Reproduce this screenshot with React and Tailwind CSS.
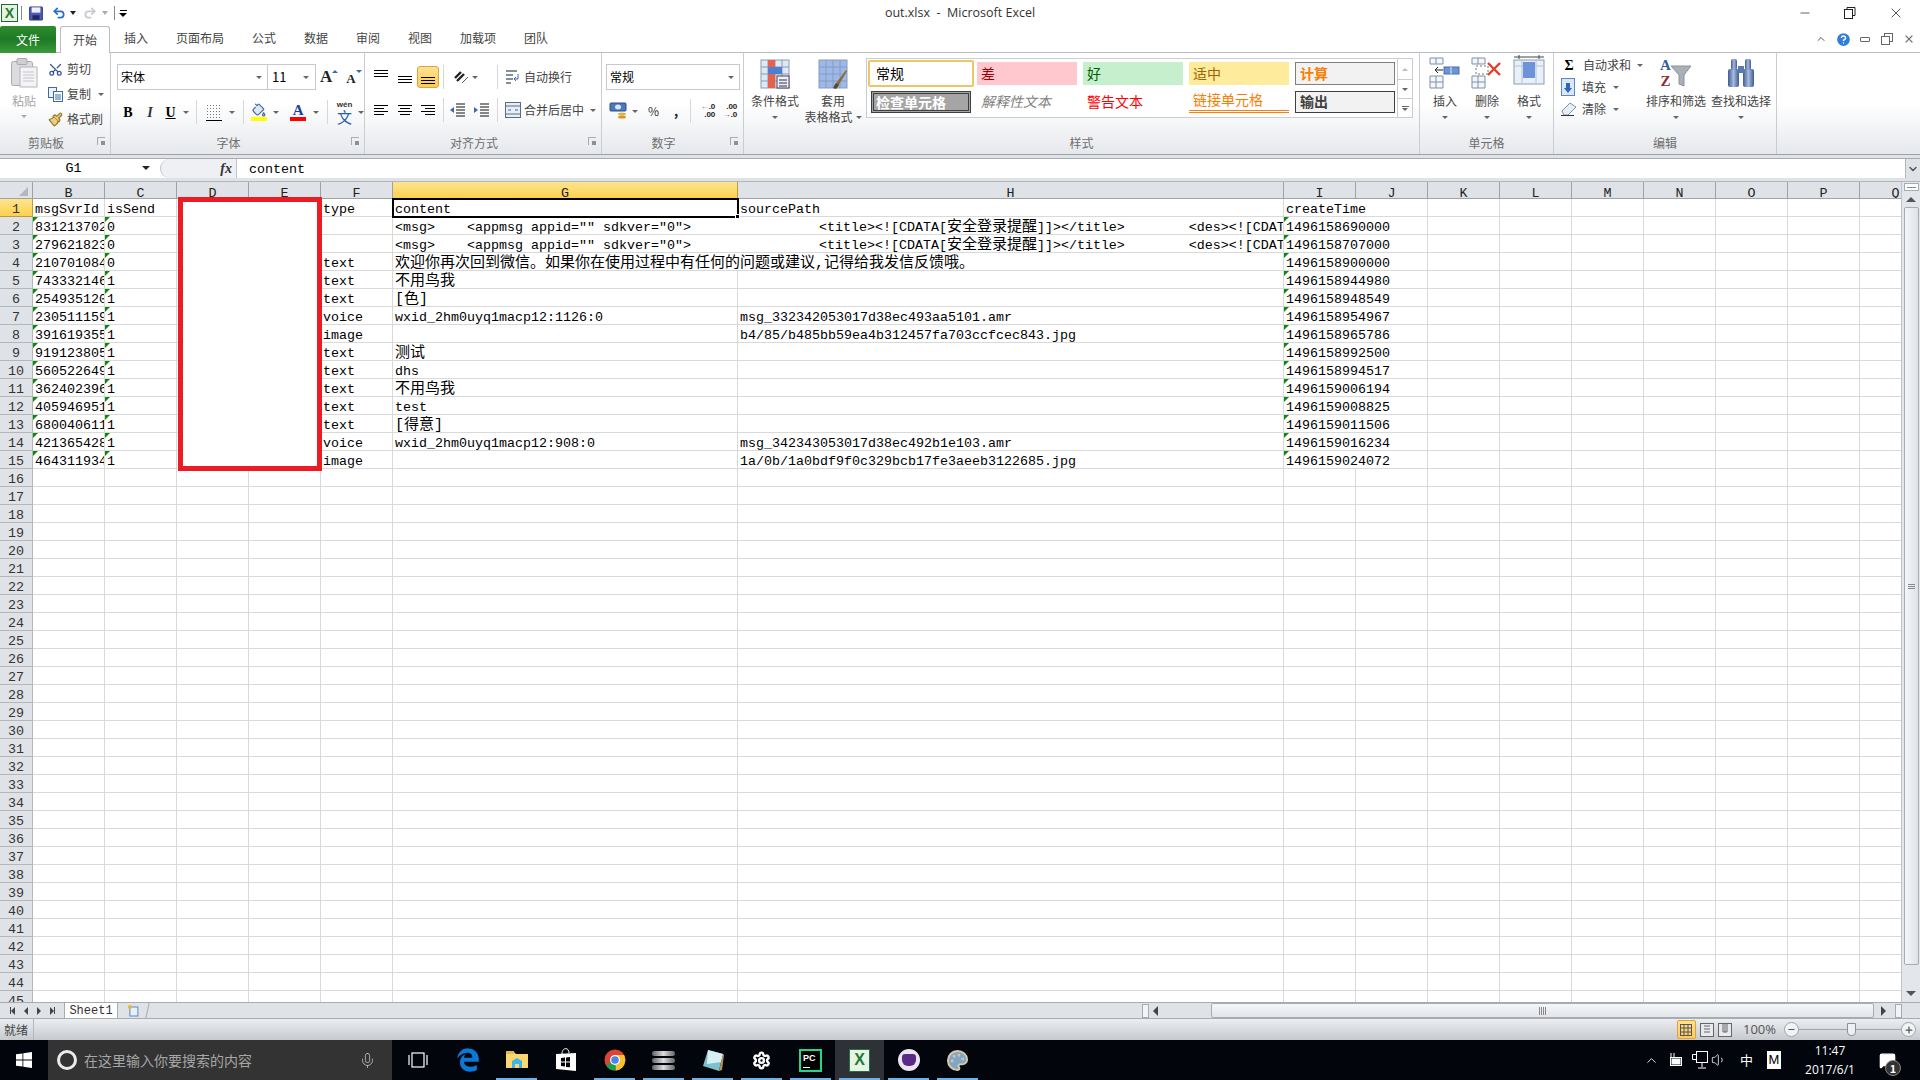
import {
  Scissors, Paintbrush, PaintBucket, Undo2, Redo2, Mic, Settings, Palette,
  ChevronUp, ChevronDown, HelpCircle, Minus, X, Volume1, MessageSquare, Plus,
} from 'lucide-react'
import { FaEdgeLegacy } from 'react-icons/fa6'

const TABS = ['插入', '页面布局', '公式', '数据', '审阅', '视图', '加载项', '团队']
const COLS = [
  ['B', 72], ['C', 72], ['D', 72], ['E', 72], ['F', 72], ['G', 345], ['H', 546],
  ['I', 72], ['J', 72], ['K', 72], ['L', 72], ['M', 72], ['N', 72], ['O', 72], ['P', 72], ['Q', 72],
]

function Cjk({ children }) {
  return <span className="text-[15px]">{children}</span>
}

const XML = (
  <>
    {'<msg>    <appmsg appid="" sdkver="0">                <title><![CDATA['}
    <Cjk>安全登录提醒</Cjk>
    {']]></title>        <des><![CDATA['}
    <Cjk>安全登录提醒</Cjk>
  </>
)

const DATA = [
  ['msgSvrId', 'isSend', 'type', 'content', 'sourcePath', 'createTime'],
  ['831213702', '0', '', XML, '', '1496158690000'],
  ['279621823', '0', '', XML, '', '1496158707000'],
  ['210701084', '0', 'text', <Cjk>欢迎你再次回到微信。如果你在使用过程中有任何的问题或建议,记得给我发信反馈哦。</Cjk>, '', '1496158900000'],
  ['743332146', '1', 'text', <Cjk>不用鸟我</Cjk>, '', '1496158944980'],
  ['254935120', '1', 'text', <Cjk>[色]</Cjk>, '', '1496158948549'],
  ['230511159', '1', 'voice', 'wxid_2hm0uyq1macp12:1126:0', 'msg_332342053017d38ec493aa5101.amr', '1496158954967'],
  ['391619355', '1', 'image', '', 'b4/85/b485bb59ea4b312457fa703ccfcec843.jpg', '1496158965786'],
  ['919123805', '1', 'text', <Cjk>测试</Cjk>, '', '1496158992500'],
  ['560522649', '1', 'text', 'dhs', '', '1496158994517'],
  ['362402396', '1', 'text', <Cjk>不用鸟我</Cjk>, '', '1496159006194'],
  ['405946951', '1', 'text', 'test', '', '1496159008825'],
  ['680040611', '1', 'text', <Cjk>[得意]</Cjk>, '', '1496159011506'],
  ['421365428', '1', 'voice', 'wxid_2hm0uyq1macp12:908:0', 'msg_342343053017d38ec492b1e103.amr', '1496159016234'],
  ['464311934', '1', 'image', '', '1a/0b/1a0bdf9f0c329bcb17fe3aeeb3122685.jpg', '1496159024072'],
]

function Caret({ className = '' }) {
  return <span className={`inline-block w-0 h-0 border-x-[3px] border-x-transparent border-t-[3px] border-t-[#666] ${className}`} />
}

function Lines({ widths = [14, 14, 14] }) {
  return (
    <span className="flex flex-col gap-[2px] items-start">
      {widths.map((w, i) => (
        <span key={i} className="h-px bg-black" style={{ width: w }} />
      ))}
    </span>
  )
}

function Launcher() {
  return (
    <span className="absolute right-[5px] top-[6px] w-[8px] h-[8px] border-l border-t border-[#a8abb0]">
      <span className="absolute right-0 bottom-0 w-[4px] h-[4px] bg-[#8d9096]" />
    </span>
  )
}

function Group({ width, title, children }) {
  const launcher = title !== '样式' && title !== '单元格' && title !== '编辑'
  return (
    <div className="flex flex-col shrink-0 border-r border-r-[#c9ccd1] h-full" style={{ width }}>
      <div className="h-[79px] relative">{children}</div>
      <div className={`h-[23px] flex items-center justify-center relative text-[12px] text-[#6e6e6e] ${launcher ? 'pr-[18px]' : ''}`}>
        {title}
        {launcher && <Launcher />}
      </div>
    </div>
  )
}

function Sep() {
  return <span className="block w-px h-[24px] bg-[#d5d7db] shrink-0" />
}

function GridIcon({ size = 30, fill = '#dfe8f5', children }) {
  return (
    <svg width={size} height={size} viewBox="0 0 30 30">
      <rect x="1" y="1" width="28" height="28" fill={fill} stroke="#8a9bb4" />
      <path d="M1 8h28M1 15h28M1 22h28M8 1v28M15 1v28M22 1v28" stroke="#8a9bb4" fill="none" />
      {children}
    </svg>
  )
}

function BigButton({ icon, lines, width = 50 }) {
  return (
    <div className="flex flex-col items-center shrink-0" style={{ width }}>
      <div className="h-[36px] flex items-end justify-center">{icon}</div>
      <div className="mt-[4px] h-[16px] leading-[16px] whitespace-nowrap text-[12px] text-[#444]">{lines[0]}</div>
      <div className="h-[16px] flex items-center justify-center gap-[3px] whitespace-nowrap text-[12px] text-[#444]">
        {lines[1] && <span>{lines[1]}</span>}
        <Caret />
      </div>
    </div>
  )
}

function ClipboardGroup() {
  return (
    <Group width={111} title="剪贴板">
      <div className="flex h-full">
        <div className="w-[48px] flex flex-col items-center pt-[5px] text-[#a5a5a5] text-[12px]">
          <svg width="27" height="30" viewBox="0 0 27 30">
            <rect x="0.5" y="3.5" width="21" height="24" rx="2" fill="#dcdbe0" stroke="#a9a8ae" />
            <rect x="6" y="0.5" width="10" height="6" rx="1" fill="#cfced4" stroke="#a9a8ae" />
            <path d="M9 9h17v20H9z" fill="#f4f4f6" stroke="#b4b4ba" />
            <path d="M12 14h11M12 17h11M12 20h11M12 23h11" stroke="#c6c6cc" />
          </svg>
          <div className="mt-[4px] text-[12px] leading-[18px]">粘贴</div>
          <Caret className="mt-[5px] border-t-[#aaa]" />
        </div>
        <div className="flex flex-col pt-[8px] text-[12px] text-[#444] gap-[9px]">
          <div className="flex items-center gap-[4px] h-[16px]">
            <Scissors size={15} className="text-[#34558b] -rotate-90" />
            <span>剪切</span>
          </div>
          <div className="flex items-center gap-[4px] h-[16px]">
            <svg width="15" height="15" viewBox="0 0 15 15">
              <rect x="0.5" y="0.5" width="8" height="10" fill="#eef3fa" stroke="#3d6aa8" />
              <rect x="5.5" y="4.5" width="9" height="10" fill="#fff" stroke="#3d6aa8" />
              <path d="M7 8h6M7 10h6M7 12h6" stroke="#3d6aa8" />
            </svg>
            <span>复制</span>
            <Caret className="ml-[3px]" />
          </div>
          <div className="flex items-center gap-[4px] h-[16px]">
            <Paintbrush size={15} className="text-[#9a7a2c] fill-[#e8cf85]" />
            <span>格式刷</span>
          </div>
        </div>
      </div>
    </Group>
  )
}

function FontGroup() {
  return (
    <Group width={254} title="字体">
      <div className="pl-[6px]">
        <div className="flex items-center mt-[11px] h-[26px]">
          <div className="w-[151px] h-[26px] border border-[#c6c9ce] bg-white flex items-center justify-between px-[3px] text-[12px]">
            <span>宋体</span>
            <Caret className="mr-[2px]" />
          </div>
          <div className="w-[48px] h-[26px] border border-l-0 border-[#c6c9ce] bg-white flex items-center justify-between px-[4px] text-[13px]">
            <span>11</span>
            <Caret className="mr-[2px]" />
          </div>
          <span className="ml-[4px] font-['Liberation_Serif',serif] font-bold text-[17px] text-[#222]">A</span>
          <span className="w-0 h-0 mb-[12px] border-x-[3px] border-x-transparent border-b-[3px] border-b-[#3d6aa8]" />
          <span className="ml-[8px] mt-[3px] font-['Liberation_Serif',serif] font-bold text-[13px] text-[#222]">A</span>
          <span className="w-0 h-0 mb-[12px] border-x-[3px] border-x-transparent border-t-[3px] border-t-[#3d6aa8]" />
        </div>
        <div className="flex items-center mt-[10px] h-[24px] font-['Liberation_Serif',serif]">
          <span className="w-[23px] text-center font-bold text-[14px] text-black">B</span>
          <span className="w-[24px] text-center italic font-bold text-[14px] text-[#333]">I</span>
          <span className="w-[20px] text-center font-bold underline text-[14px] text-black">U</span>
          <span className="w-[12px] flex justify-center"><Caret /></span>
          <span className="ml-[5px]"><Sep /></span>
          <span className="ml-[9px] w-[17px] h-[17px] border-b border-black [background-image:radial-gradient(#777_0.6px,transparent_0.7px)] [background-size:3px_3px]" />
          <span className="ml-[7px] flex"><Caret /></span>
          <span className="ml-[8px]"><Sep /></span>
          <span className="ml-[7px] w-[17px] flex flex-col items-center">
            <PaintBucket size={14} className="text-[#3d6aa8] fill-[#dce6f4]" />
            <span className="w-[16px] h-[4px] bg-[#ffff00]" />
          </span>
          <span className="ml-[6px] flex"><Caret /></span>
          <span className="ml-[11px] w-[16px] flex flex-col items-center text-[15px] leading-[14px] font-bold text-[#20409a]">
            A
            <span className="w-[16px] h-[4px] bg-[#ff0000]" />
          </span>
          <span className="ml-[7px] flex"><Caret /></span>
          <span className="ml-[8px]"><Sep /></span>
          <span className="ml-[7px] w-[20px] flex flex-col items-center leading-none font-['Liberation_Sans',sans-serif]">
            <span className="text-[8px] font-bold text-[#333]">wén</span>
            <span className="text-[15px] leading-[15px] text-[#2a5db0] font-['Noto_Sans_CJK_SC',sans-serif]">文</span>
          </span>
          <span className="ml-[4px] flex"><Caret /></span>
        </div>
      </div>
    </Group>
  )
}

function AlignGroup() {
  return (
    <Group width={237} title="对齐方式">
      <div className="pl-[9px]">
        <div className="flex items-center mt-[12px] h-[24px]">
          <span className="w-[22px] h-[22px] flex pt-[4px]"><Lines /></span>
          <span className="w-[20px] h-[22px] flex items-center pl-[2px] pt-[5px]"><Lines /></span>
          <span className="ml-[1px] w-[22px] h-[22px] rounded-[3px] border border-[#d9a441] bg-gradient-to-b from-[#fee28f] to-[#fdc95a] flex items-end justify-center pb-[3px]"><Lines /></span>
          <span className="ml-[4px]"><Sep /></span>
          <span className="ml-[9px] w-[16px] h-[16px] flex items-center">
            <svg width="16" height="16" viewBox="0 0 16 16"><path d="M2 9l6-6M4 12l7-7" stroke="#222" strokeWidth="2.4" /><path d="M9 14l6-6" stroke="#555" /></svg>
          </span>
          <span className="ml-[3px] flex"><Caret /></span>
          <span className="ml-[19px]"><Sep /></span>
          <span className="ml-[7px] flex">
            <svg width="16" height="16" viewBox="0 0 16 16"><path d="M1 2h11M1 6h7M1 10h7M1 14h5" stroke="#5c6b7e" strokeWidth="1.4" /><path d="M13 5v5h-3M11 8l-2 2 2 2" stroke="#3d6aa8" fill="none" /></svg>
          </span>
          <span className="ml-[3px] text-[12px] text-[#444]">自动换行</span>
        </div>
        <div className="flex items-center mt-[9px] h-[24px]">
          <span className="w-[22px]"><Lines widths={[14, 10, 14, 10]} /></span>
          <span className="w-[20px] pl-[2px]"><span className="flex flex-col gap-[2px] items-center w-[14px]">
            {[14, 10, 14, 10].map((w, i) => <span key={i} className="h-px bg-black" style={{ width: w }} />)}
          </span></span>
          <span className="ml-[1px] w-[22px] pl-[4px]"><span className="flex flex-col gap-[2px] items-end w-[14px]">
            {[14, 10, 14, 10].map((w, i) => <span key={i} className="h-px bg-black" style={{ width: w }} />)}
          </span></span>
          <span className="ml-[4px]"><Sep /></span>
          <span className="ml-[6px] flex gap-[8px]">
            {['M0 7l4-3v6z', 'M0 4l4 3-4 3z'].map((d) => (
              <svg key={d} width="16" height="14" viewBox="0 0 16 14">
                <path d={d} fill="#3d6aa8" />
                <path d="M6 1h9M6 4h9M6 7h9M6 10h9M6 13h9" stroke="#111" />
              </svg>
            ))}
          </span>
          <span className="ml-[7px]"><Sep /></span>
          <span className="ml-[7px] flex">
            <svg width="16" height="16" viewBox="0 0 16 16"><rect x="0.5" y="0.5" width="15" height="15" fill="#e8eef7" stroke="#5c6b7e" /><path d="M1 4h14M1 12h14" stroke="#5c6b7e" /><path d="M3 8h3M10 8h3" stroke="#3d6aa8" /></svg>
          </span>
          <span className="ml-[3px] text-[12px] text-[#444]">合并后居中</span>
          <Caret className="ml-[6px]" />
        </div>
      </div>
    </Group>
  )
}

function NumberGroup() {
  return (
    <Group width={142} title="数字">
      <div className="pl-[4px]">
        <div className="mt-[11px] w-[134px] h-[26px] border border-[#c6c9ce] bg-white flex items-center justify-between px-[3px] text-[12px]">
          <span>常规</span>
          <Caret className="mr-[2px]" />
        </div>
        <div className="flex items-center mt-[9px] h-[24px] pl-[3px]">
          <svg width="18" height="18" viewBox="0 0 18 18"><rect x="1" y="1" width="16" height="8" rx="1" fill="#4c78bd" stroke="#2c4f86" /><ellipse cx="9" cy="5" rx="3" ry="2.5" fill="#dce6f4" /><ellipse cx="13" cy="12" rx="4" ry="1.6" fill="#e2b23e" /><ellipse cx="13" cy="15" rx="4" ry="1.6" fill="#d19a22" /></svg>
          <Caret className="ml-[5px]" />
          <span className="ml-[10px] text-[12px] text-[#333]">%</span>
          <span className="ml-[15px] font-bold text-[13px] text-[#222]">,</span>
          <span className="ml-[12px]"><Sep /></span>
          <span className="ml-[8px] w-[16px] text-[8px] leading-[8px] font-bold text-[#222] text-right font-['Liberation_Sans',sans-serif]">
            <span className="text-[#3d6aa8]">←</span>.0<br />.00
          </span>
          <span className="ml-[6px] w-[16px] text-[8px] leading-[8px] font-bold text-[#222] text-right font-['Liberation_Sans',sans-serif]">
            .00<br /><span className="text-[#3d6aa8]">→</span>.0
          </span>
        </div>
      </div>
    </Group>
  )
}

function StyleCell({ className, children }) {
  return <div className={`flex items-center shrink-0 text-[14px] leading-none whitespace-nowrap ${className}`}>{children}</div>
}

function StylesGroup() {
  return (
    <Group width={676} title="样式">
      <div className="flex h-full">
        <div className="ml-[2px]">
          <BigButton
            width={58}
            lines={['条件格式']}
            icon={
              <GridIcon>
                <rect x="8" y="1" width="7" height="28" fill="#e8604c" />
                <rect x="8" y="8" width="14" height="7" fill="#4f7fd0" />
                <rect x="17" y="17" width="12" height="12" fill="#eef" stroke="#445" />
                <path d="M19 21h8M19 24h8M19 27h8" stroke="#333" />
              </GridIcon>
            }
          />
        </div>
        <div>
          <BigButton
            width={58}
            lines={['套用', '表格格式']}
            icon={
              <GridIcon fill="#9db9ec">
                <path d="M16 27l12-16 1 1-10 17z" fill="#8a6c3a" />
                <path d="M15 29l3-5 3 2-3 4z" fill="#4f4a3f" />
              </GridIcon>
            }
          />
        </div>
        <div className="mt-[5px] ml-[4px] w-[547px] h-[60px] border border-[#c9ccd1] bg-white flex">
          <div className="flex-1 flex flex-col gap-[3px] pl-[1px] pt-[1px]">
            <div className="flex items-center gap-[3px] h-[27px]">
              <StyleCell className="w-[106px] h-[27px] border-2 border-[#f0c566] rounded-[2px] pl-[6px] pb-[2px] text-black">常规</StyleCell>
              <StyleCell className="w-[100px] h-[23px] bg-[#ffc7ce] pl-[4px] pb-[2px] text-[#9c0006]">差</StyleCell>
              <StyleCell className="ml-[3px] w-[100px] h-[23px] bg-[#c6efce] pl-[4px] pb-[2px] text-[#006100]">好</StyleCell>
              <StyleCell className="ml-[3px] w-[100px] h-[23px] bg-[#ffeb9c] pl-[4px] pb-[2px] text-[#9c6500]">适中</StyleCell>
              <StyleCell className="ml-[3px] w-[100px] h-[23px] bg-[#f2f2f2] border border-[#7f7f7f] pl-[4px] pb-[2px] text-[#fa7d00] font-bold">计算</StyleCell>
            </div>
            <div className="flex items-center gap-[3px] h-[23px]">
              <StyleCell className="ml-[3px] w-[100px] h-[22px] bg-[#a5a5a5] border-[3px] border-double border-[#3f3f3f] pl-[2px] text-white font-bold">检查单元格</StyleCell>
              <StyleCell className="ml-[3px] w-[100px] h-[22px] pl-[4px] pb-[2px] text-[#7f7f7f] italic">解释性文本</StyleCell>
              <StyleCell className="ml-[3px] w-[100px] h-[22px] pl-[4px] pb-[2px] text-[#ff0000]">警告文本</StyleCell>
              <StyleCell className="ml-[3px] w-[100px] h-[22px] pl-[4px] pb-[2px] text-[#fa7d00] border-b-[3px] border-double border-[#ff8001]">链接单元格</StyleCell>
              <StyleCell className="ml-[3px] w-[100px] h-[22px] bg-[#f2f2f2] border border-[#3f3f3f] pl-[4px] pb-[2px] text-[#3f3f3f] font-bold">输出</StyleCell>
            </div>
          </div>
          <div className="w-[15px] flex flex-col border-l border-[#c9ccd1] text-[#666]">
            <div className="h-[21px] flex items-center justify-center border-b border-[#c9ccd1]"><Caret className="rotate-180 border-t-[#bbb]" /></div>
            <div className="h-[19px] flex items-center justify-center border-b border-[#c9ccd1]"><Caret /></div>
            <div className="flex-1 flex flex-col items-center justify-center gap-[1px]"><span className="w-[7px] h-px bg-[#666]" /><Caret /></div>
          </div>
        </div>
      </div>
    </Group>
  )
}

function CellsGroup() {
  return (
    <Group width={134} title="单元格">
      <div className="flex pl-[4px]">
        <BigButton
          width={42}
          lines={['插入']}
          icon={
            <svg width="32" height="32" viewBox="0 0 32 32" fill="none">
              <path d="M1 1h13v6H1zM1 19h13v12H1zM1 25h13M7 1v6M7 19v12" stroke="#7e8fa8" fill="#f3f6fb" />
              <rect x="15" y="10" width="15" height="7" fill="#6d94d8" stroke="#4a6ea8" />
              <path d="M22 10v7" stroke="#dfe8f5" />
              <path d="M14 13H6M9 10l-3 3 3 3" stroke="#222" />
            </svg>
          }
        />
        <BigButton
          width={42}
          lines={['删除']}
          icon={
            <svg width="32" height="32" viewBox="0 0 32 32" fill="none">
              <path d="M1 1h13v6H1zM1 19h13v12H1zM1 25h13M7 1v6M7 19v12" stroke="#7e8fa8" fill="#f3f6fb" />
              <path d="M5 9h12v8H5z" stroke="#777" strokeDasharray="2 2" />
              <path d="M17 6l12 12M29 6L17 18" stroke="#e2402c" strokeWidth="2.4" />
            </svg>
          }
        />
        <BigButton
          width={42}
          lines={['格式']}
          icon={
            <svg width="32" height="34" viewBox="0 0 32 34" fill="none">
              <path d="M1 2h30M6 0v4M26 0v4" stroke="#444" />
              <rect x="1" y="5" width="30" height="24" fill="#eaf0f8" stroke="#8a9bb4" />
              <path d="M1 11h30M9 5v24M23 5v24" stroke="#b6c3d6" />
              <rect x="10" y="7" width="12" height="16" fill="#6d94d8" />
            </svg>
          }
        />
      </div>
    </Group>
  )
}

function EditGroup() {
  return (
    <Group width={223} title="编辑">
      <div className="flex h-full pl-[7px]">
        <div className="w-[90px] flex flex-col pt-[4px] gap-[6px] text-[12px] text-[#444]">
          <div className="flex items-center h-[16px] gap-[6px]">
            <span className="w-[16px] text-center text-[14px] font-bold text-black font-['Liberation_Serif',serif]">Σ</span>
            <span>自动求和</span>
            <Caret />
          </div>
          <div className="flex items-center h-[16px] gap-[5px]">
            <svg width="14" height="18" viewBox="0 0 14 18"><rect x="0.5" y="0.5" width="13" height="17" fill="#dbe6f6" stroke="#5b86c8" /><path d="M5 5h4v5h2l-4 5-4-5h2z" fill="#2f66b8" /></svg>
            <span className="ml-[2px]">填充</span>
            <Caret className="ml-[2px]" />
          </div>
          <div className="flex items-center h-[16px] gap-[5px]">
            <svg width="16" height="14" viewBox="0 0 16 14"><path d="M1 9l8-8 6 4-8 8H3z" fill="#e9eef5" stroke="#7e8fa8" /><path d="M0 13.5h13" stroke="#333" /></svg>
            <span>清除</span>
            <Caret className="ml-[2px]" />
          </div>
        </div>
        <div className="flex -ml-[8px]">
          <BigButton
            width={66}
            lines={['排序和筛选']}
            icon={
              <span className="relative flex items-end w-[32px] h-[36px]">
                <span className="flex flex-col items-center font-['Liberation_Serif',serif] font-bold text-[15px] leading-[16px]">
                  <span className="text-[#2f5fa8]">A</span>
                  <span className="text-[#8b2f2f]">Z</span>
                </span>
                <svg width="20" height="24" viewBox="0 0 20 24" className="mb-[1px]"><path d="M0 2h20l-7 9v11l-5-2v-9z" fill="#aab0b8" stroke="#8d939b" /></svg>
              </span>
            }
          />
          <BigButton
            width={64}
            lines={['查找和选择']}
            icon={
              <svg width="28" height="32" viewBox="0 0 28 32">
                <defs><linearGradient id="bino" x1="0" x2="1"><stop offset="0" stopColor="#405b92" /><stop offset="0.5" stopColor="#a6bbdf" /><stop offset="1" stopColor="#3f5a90" /></linearGradient></defs>
                <rect x="1" y="12" width="11" height="18" rx="2" fill="url(#bino)" />
                <rect x="16" y="12" width="11" height="18" rx="2" fill="url(#bino)" />
                <rect x="4" y="2" width="6" height="11" rx="2" fill="url(#bino)" />
                <rect x="18" y="2" width="6" height="11" rx="2" fill="url(#bino)" />
                <rect x="11" y="9" width="6" height="7" fill="#5d78ab" />
              </svg>
            }
          />
        </div>
      </div>
    </Group>
  )
}

function TitleBar() {
  return (
    <div className="h-[26px] grid grid-cols-[1fr_auto_1fr] items-center bg-white">
      <div className="flex items-center pl-[1px] h-full">
        <span className="w-[17px] h-[18px] border border-[#1d6b33] bg-[#e4f2df] flex items-center justify-center text-[#1d7a35] font-bold text-[14px] leading-none font-['Liberation_Sans',sans-serif]">X</span>
        <span className="ml-[3px] w-px h-[14px] bg-[#888]" />
        <svg width="14" height="15" viewBox="0 0 16 16" className="ml-[7px]">
          <rect x="0.5" y="0.5" width="15" height="15" rx="1" fill="#4d57b5" stroke="#2c3278" />
          <rect x="3" y="1" width="10" height="6" fill="#eef0fb" />
          <rect x="4" y="10" width="8" height="5" fill="#23285a" />
        </svg>
        <Undo2 size={14} strokeWidth={3} className="ml-[9px] text-[#2b6fc0]" />
        <span className="ml-[4px] w-0 h-0 border-x-[3px] border-x-transparent border-t-[4px] border-t-[#222]" />
        <Redo2 size={14} strokeWidth={3} className="ml-[7px] text-[#c5cad0]" />
        <span className="ml-[5px] w-0 h-0 border-x-[3px] border-x-transparent border-t-[4px] border-t-[#aaa]" />
        <span className="ml-[6px] w-px h-[14px] bg-[#888]" />
        <span className="ml-[4px] flex flex-col items-center gap-[2px]">
          <span className="w-[7px] h-px bg-black" />
          <span className="w-0 h-0 border-x-[4px] border-x-transparent border-t-[4px] border-t-black" />
        </span>
      </div>
      <div className="text-[12.5px] text-[#333] font-['Open_Sans',sans-serif] whitespace-pre">out.xlsx  -  Microsoft Excel</div>
      <div className="flex justify-end items-center pr-[16px] gap-[32px] text-[#222]">
        <Minus size={14} strokeWidth={1.2} />
        <svg width="12" height="12" viewBox="0 0 12 12" fill="none" stroke="#222"><rect x="0.5" y="2.5" width="8" height="9" /><path d="M3 2.5v-2h8v8h-2.5" /></svg>
        <X size={16} strokeWidth={1.2} />
      </div>
    </div>
  )
}

function TabBar() {
  return (
    <div className="h-[26px] flex items-end text-[12px] text-[#444] bg-white relative">
      <div className="w-[56px] h-[27px] -mb-px bg-gradient-to-b from-[#2e8b2e] via-[#1d7a26] to-[#3a9a3a] rounded-t-[2px] text-white flex items-center justify-center">文件</div>
      <div className="ml-[4px] w-[50px] h-[27px] -mb-px z-10 bg-white border border-b-0 border-[#b9bcc1] rounded-t-[3px] flex items-center justify-center pb-[1px]">开始</div>
      {TABS.map((tab) => (
        <div key={tab} className="px-[14px] h-[26px] flex items-center pb-[2px]">{tab}</div>
      ))}
      <div className="ml-auto self-center flex items-center pr-[5px] text-[#555]">
        <ChevronUp size={12} strokeWidth={2} />
        <HelpCircle size={17} className="ml-[8px] fill-[#2f7fd6] text-white" />
        <span className="ml-[8px] w-[10px] h-[5px] border border-[#666] rounded-[1px] bg-white" />
        <svg width="12" height="12" viewBox="0 0 12 12" fill="#fff" stroke="#666" className="ml-[11px]"><rect x="3.5" y="0.5" width="8" height="8" /><rect x="0.5" y="3.5" width="8" height="8" /></svg>
        <X size={12} strokeWidth={2.4} className="ml-[10px] text-[#777]" />
      </div>
    </div>
  )
}

function Ribbon() {
  return (
    <div className="h-[103px] flex border-t border-b border-t-[#b9bcc1] border-b-[#9fa3a8] bg-gradient-to-b from-white via-white to-[#e6e8ec]">
      <ClipboardGroup />
      <FontGroup />
      <AlignGroup />
      <NumberGroup />
      <StylesGroup />
      <CellsGroup />
      <EditGroup />
    </div>
  )
}

function FormulaBar() {
  return (
    <div className="h-[27px] pt-[3px] bg-[#dfe2e7] border-b border-[#b3b6bb]">
      <div className="h-[20px] flex bg-white font-['Liberation_Mono',monospace] text-[13.33px] text-black border-t border-[#a8abb0]">
        <div className="w-[160px] flex items-center justify-center relative pl-[26px] pr-[27px] pt-[1px]">
          <span className="mr-[12px]">G1</span>
          <span className="absolute right-[10px] top-[7px] w-0 h-0 border-x-[4px] border-x-transparent border-t-[4px] border-t-[#222]" />
        </div>
        <div className="w-[77px] border-l border-[#c0c3c8] rounded-l-full bg-[#eef0f3] flex items-center justify-end pr-[4px] font-['Liberation_Serif',serif] italic font-bold text-[14px] text-[#333] border-r">
          fx
        </div>
        <div className="flex-1 pl-[12px] leading-[21px]">content</div>
        <div className="w-[15px] bg-[#dfe2e7] border-l border-[#b3b6bb] flex items-center justify-center">
          <ChevronDown size={12} strokeWidth={3} className="text-[#555]" />
        </div>
      </div>
    </div>
  )
}

function HeaderRow() {
  return (
    <div className="flex h-[17px] bg-[#dfe2e7] border-b border-[#9fa3a8] text-[#222] shrink-0 overflow-hidden">
      <div className="w-[33px] shrink-0 border-r border-[#9fa3a8] relative">
        <span className="absolute right-[4px] bottom-[2px] w-0 h-0 border-l-[9px] border-l-transparent border-b-[9px] border-b-[#b4b8bd]" />
      </div>
      {COLS.map(([name, w]) => (
        <div
          key={name}
          style={{ width: w }}
          className={`shrink-0 border-r text-center leading-[23px] ${name === 'G' ? 'bg-gradient-to-b from-[#fde48d] to-[#fdd14c] border-r-[#c29a3e]' : 'border-[#9fa3a8]'}`}
        >
          {name}
        </div>
      ))}
    </div>
  )
}

function Cell({ width, mark, children }) {
  return (
    <div
      style={{ width }}
      className="relative shrink-0 h-[18px] pl-[2px] leading-[22px] whitespace-pre overflow-hidden border-r border-b border-[#d9d9d9]"
    >
      {mark && <span className="absolute left-0 top-0 w-0 h-0 border-t-[5px] border-r-[5px] border-t-[#0b8a0b] border-r-transparent" />}
      {children}
    </div>
  )
}

function Row({ index }) {
  const row = DATA[index - 1]
  const mark = index > 1 && index <= 15
  const spanned = index >= 2 && index <= 4
  return (
    <div className="flex h-[18px] shrink-0">
      <div className={`w-[33px] h-[18px] shrink-0 overflow-hidden text-center leading-[22px] border-r border-b text-[#333] ${index === 1 ? 'bg-gradient-to-b from-[#fde48d] to-[#fdd14c] border-[#c29a3e]' : 'bg-[#dfe2e7] border-[#b3b6bb]'}`}>
        {index}
      </div>
      <Cell width={72} mark={mark}>{row?.[0]}</Cell>
      <Cell width={72} mark={mark}>{row?.[1]}</Cell>
      <Cell width={72} />
      <Cell width={72} />
      <Cell width={72}>{row?.[2]}</Cell>
      {spanned ? (
        <Cell width={891}>{row[3]}</Cell>
      ) : (
        <>
          <Cell width={345}>{row?.[3]}</Cell>
          <Cell width={546}>{row?.[4]}</Cell>
        </>
      )}
      {row ? (
        <Cell width={144} mark={mark}>{row[5]}</Cell>
      ) : (
        <>
          <Cell width={72} />
          <Cell width={72} />
        </>
      )}
      {COLS.slice(9).map(([name, w]) => (
        <Cell key={name} width={w} />
      ))}
    </div>
  )
}

function SheetGrid() {
  return (
    <div className="relative w-[1901px] h-full overflow-hidden shrink-0 flex flex-col font-['Liberation_Mono','Noto_Sans_CJK_SC',monospace] text-[13.33px] text-black bg-white">
      <HeaderRow />
      {Array.from({ length: 45 }, (_, i) => (
        <Row key={i} index={i + 1} />
      ))}
      {/* selected G1 */}
      <div className="absolute left-[392px] top-[16px] w-[347px] h-[20px] border-2 border-black">
        <span className="absolute -right-[3px] -bottom-[3px] w-[5px] h-[5px] bg-black border border-white" />
      </div>
      {/* redacted D:E block */}
      <div className="absolute left-[178px] top-[15px] w-[144px] h-[274px] border-[5px] border-[#ed1c24] bg-white" />
    </div>
  )
}

function VScroll() {
  return (
    <div className="flex-1 bg-[#e3e6ea] flex flex-col items-center pt-[1px] border-l border-[#c0c3c8]">
      <div className="w-[15px] h-[8px] bg-white border border-[#a8abb0] flex items-center justify-center">
        <span className="w-[9px] h-px bg-[#888]" />
      </div>
      <div className="h-[16px] flex items-center">
        <span className="w-0 h-0 border-x-[5px] border-x-transparent border-b-[5px] border-b-[#555]" />
      </div>
      <div className="w-[15px] h-[758px] border border-[#a8abb0] rounded-[2px] bg-gradient-to-r from-[#f5f6f8] to-[#dfe2e7] flex flex-col items-center justify-center gap-[1px]">
        <span className="w-[7px] h-px bg-[#888]" />
        <span className="w-[7px] h-px bg-[#888]" />
        <span className="w-[7px] h-px bg-[#888]" />
      </div>
      <div className="mt-auto h-[17px] flex items-center">
        <span className="w-0 h-0 border-x-[5px] border-x-transparent border-t-[5px] border-t-[#555]" />
      </div>
    </div>
  )
}

function SheetBar() {
  return (
    <div className="h-[16px] flex items-center bg-[#dfe2e7] border-t border-[#a8abb0] shrink-0">
      <div className="w-[64px] flex items-center justify-around px-[5px] text-[#444]">
        <span className="flex items-center"><span className="w-px h-[7px] bg-[#444]" /><span className="w-0 h-0 border-y-[4px] border-y-transparent border-r-[4px] border-r-[#444]" /></span>
        <span className="w-0 h-0 border-y-[4px] border-y-transparent border-r-[4px] border-r-[#444]" />
        <span className="w-0 h-0 border-y-[4px] border-y-transparent border-l-[4px] border-l-[#444]" />
        <span className="flex items-center"><span className="w-0 h-0 border-y-[4px] border-y-transparent border-l-[4px] border-l-[#444]" /><span className="w-px h-[7px] bg-[#444]" /></span>
      </div>
      <div className="w-[54px] h-[15px] shrink-0 bg-white border-x border-[#a8abb0] text-center leading-[17px] text-[12px] font-['Liberation_Mono',monospace] text-[#333]">Sheet1</div>
      <div className="ml-[2px] w-[28px] h-[15px] shrink-0 flex items-center justify-center -skew-x-12 border-r border-[#a8abb0]">
        <svg width="14" height="12" viewBox="0 0 14 12" className="skew-x-12"><rect x="3" y="2" width="8" height="9" fill="#eaf0f8" stroke="#5b86c8" /><circle cx="3" cy="2" r="2" fill="#e8b830" /></svg>
      </div>
      <div className="ml-auto flex items-center h-full">
        <span className="w-[7px] h-[14px] bg-[#f3f4f6] border border-[#a8abb0]" />
        <span className="ml-[4px] w-0 h-0 border-y-[5px] border-y-transparent border-r-[5px] border-r-[#444]" />
        <span className="ml-[53px] w-[663px] h-[15px] border border-[#a8abb0] rounded-[2px] bg-gradient-to-b from-[#f5f6f8] to-[#e2e5e9] flex items-center justify-center gap-[1px]">
          <span className="w-px h-[8px] bg-[#888]" /><span className="w-px h-[8px] bg-[#888]" /><span className="w-px h-[8px] bg-[#888]" /><span className="w-px h-[8px] bg-[#888]" />
        </span>
        <span className="ml-[7px] w-0 h-0 border-y-[5px] border-y-transparent border-l-[5px] border-l-[#444]" />
        <span className="ml-[9px] w-[7px] h-[14px] bg-[#f3f4f6] border border-[#a8abb0]" />
        <span className="w-[18px]" />
      </div>
    </div>
  )
}

function StatusBar() {
  return (
    <div className="h-[22px] flex items-center shrink-0 bg-gradient-to-b from-[#eceef1] to-[#c6c9ce] border-t border-[#a8abb0] text-[12px] text-[#444]">
      <span className="pl-[4px] pr-[5px] border-r border-[#b3b6bb] h-full flex items-center">就绪</span>
      <div className="ml-auto flex items-center pr-[4px]">
        <span className="w-[19px] h-[19px] rounded-[2px] border border-[#d9a441] bg-gradient-to-b from-[#fee28f] to-[#fdc95a] flex items-center justify-center">
          <svg width="12" height="12" viewBox="0 0 12 12" fill="none" stroke="#555"><rect x="0.5" y="0.5" width="11" height="11" /><path d="M0 4h12M0 8h12M4 0v12M8 0v12" /></svg>
        </span>
        <span className="ml-[4px] flex">
          <svg width="14" height="14" viewBox="0 0 14 14" fill="#e8eaed" stroke="#666"><rect x="0.5" y="0.5" width="13" height="13" /><path d="M4 3h6M4 6h6M4 9h6" /></svg>
        </span>
        <span className="ml-[4px] flex">
          <svg width="14" height="14" viewBox="0 0 14 14" fill="#e8eaed" stroke="#666"><rect x="0.5" y="0.5" width="13" height="13" /><path d="M5 1v8h4V1M7 1v8" /></svg>
        </span>
        <span className="ml-[11px] text-[13px] text-[#555] font-['Open_Sans',sans-serif]">100%</span>
        <span className="ml-[8px] w-[15px] h-[15px] rounded-full border border-[#9fa3a8] bg-[#f2f3f5] flex items-center justify-center"><Minus size={9} strokeWidth={3} className="text-[#555]" /></span>
        <span className="w-[102px] flex items-center justify-center relative h-[15px]">
          <span className="w-full h-px bg-[#9fa3a8]" />
          <span className="absolute left-[48px] top-[1px] w-[9px] h-[13px] bg-[#eef0f3] border border-[#8d9096] rounded-b-[4px]" />
        </span>
        <span className="w-[15px] h-[15px] rounded-full border border-[#9fa3a8] bg-[#f2f3f5] flex items-center justify-center"><Plus size={10} strokeWidth={3} className="text-[#555]" /></span>
      </div>
    </div>
  )
}

function AppButton({ running, active, children }) {
  return (
    <div className={`relative w-[49px] h-full flex items-center justify-center shrink-0 ${active ? 'bg-[#2e3236]' : ''}`}>
      {children}
      {running && <span className="absolute bottom-0 left-[4px] right-[4px] h-[2px] bg-[#6cb2e6]" />}
    </div>
  )
}

function Taskbar() {
  return (
    <div className="h-[40px] shrink-0 flex items-center bg-[#02060c] text-white">
      <div className="w-[48px] flex justify-center">
        <svg width="16" height="16" viewBox="0 0 16 16" fill="#fff"><path d="M0 2.3l6.5-.9v6.2H0zM7.3 1.3L16 0v7.6H7.3zM0 8.4h6.5v6.2L0 13.7zM7.3 8.4H16V16l-8.7-1.2z" /></svg>
      </div>
      <div className="w-[344px] h-full bg-[#333333] flex items-center pl-[9px] pr-[16px]">
        <span className="w-[20px] h-[20px] rounded-full border-[3px] border-white/90" />
        <span className="ml-[7px] text-[14px] text-[#a6a6a6] leading-none">在这里输入你要搜索的内容</span>
        <Mic size={17} strokeWidth={1.2} className="ml-auto text-[#bdbdbd]" />
      </div>
      <div className="w-[51px] flex justify-center">
        <svg width="20" height="16" viewBox="0 0 20 16" fill="none" stroke="#fff" strokeWidth="1.2"><rect x="4" y="1" width="12" height="14" /><path d="M1 3v10M19 3v10" /></svg>
      </div>
      <AppButton><FaEdgeLegacy size={24} className="text-[#0a78d7]" /></AppButton>
      <AppButton running>
        <svg width="22" height="20" viewBox="0 0 22 20"><path d="M0 2h8l2 2h12v14H0z" fill="#fcd770" /><rect x="0" y="1" width="8" height="3" fill="#e8b94a" /><path d="M6 18v-7l5-3 5 3v7h-3v-4H9v4z" fill="#3db5e6" /></svg>
      </AppButton>
      <AppButton>
        <svg width="22" height="24" viewBox="0 0 22 24"><path d="M1 6l20-1v18L1 21z" fill="#fff" /><path d="M7 6c0-7 7-7 7-1" fill="none" stroke="#fff" /><path d="M6 10l4-.4v4H6zM11 9.500l4-.4v4.400h-4zM6 14.500h4v4l-4-.4zM11 14.500h4v4.800l-4-.4z" fill="#02060c" /></svg>
      </AppButton>
      <AppButton running>
        <svg width="22" height="22" viewBox="0 0 22 22">
          <circle cx="11" cy="11" r="10.500" fill="#dc4437" />
          <path d="M11 11L2 16a10.500 10.500 0 0 0 10 5.500z" fill="#1a9e4f" />
          <path d="M11 6h9a10.500 10.500 0 0 1-8 15.500z" fill="#fbc02d" />
          <circle cx="11" cy="11" r="5" fill="#fff" />
          <circle cx="11" cy="11" r="3.800" fill="#4a86e8" />
        </svg>
      </AppButton>
      <AppButton running>
        <span className="flex flex-col gap-[2px]">
          <span className="w-[23px] h-[5px] rounded-[3px] bg-gradient-to-r from-[#666] via-[#ddd] to-[#666]" />
          <span className="w-[23px] h-[5px] rounded-[3px] bg-gradient-to-r from-[#666] via-[#ddd] to-[#666]" />
          <span className="w-[23px] h-[5px] rounded-[3px] bg-gradient-to-r from-[#666] via-[#ddd] to-[#666]" />
        </span>
      </AppButton>
      <AppButton running>
        <svg width="22" height="22" viewBox="0 0 22 22"><path d="M6 1l15 4-4 17-16-5z" fill="#7cc0cc" /><path d="M6 1l15 4-2 8-14 2z" fill="#d7eef2" /><path d="M21 5l-4 17 3-1 2-15z" fill="#b8925a" /></svg>
      </AppButton>
      <AppButton running><Settings size={19} strokeWidth={3} className="text-white" /></AppButton>
      <AppButton running>
        <span className="w-[23px] h-[23px] border-2 border-[#21d789] bg-black flex flex-col justify-between p-[2px] text-[9px] leading-[10px] font-bold text-white font-['Liberation_Sans',sans-serif]">
          PC
          <span className="w-[7px] h-px bg-white" />
        </span>
      </AppButton>
      <AppButton running active>
        <span className="w-[21px] h-[23px] bg-[#e7f3e4] border border-[#207245] flex items-center justify-center text-[#1d7a35] font-bold text-[16px] leading-none font-['Liberation_Sans',sans-serif]">X</span>
      </AppButton>
      <AppButton running>
        <span className="w-[22px] h-[22px] rounded-full bg-[#e9e6f2] flex items-center justify-center">
          <span className="w-[14px] h-[12px] rounded-b-[6px] rounded-t-[3px] bg-[#5a2a86]" />
        </span>
      </AppButton>
      <AppButton running><Palette size={23} className="text-[#d9c9a6] fill-[#7fa6c9]" /></AppButton>
      <div className="ml-auto flex items-center h-full text-white pr-[9px]">
        <ChevronUp size={15} strokeWidth={1.4} />
        <svg width="15" height="14" viewBox="0 0 15 14" className="ml-[9px]" fill="none" stroke="#fff"><rect x="2.500" y="4.500" width="11" height="8" /><rect x="4" y="6" width="8" height="5" fill="#fff" /><path d="M3 0v4M6 0v4" /></svg>
        <svg width="16" height="18" viewBox="0 0 16 18" className="ml-[9px]" fill="none" stroke="#fff"><rect x="4.500" y="0.500" width="11" height="11" /><path d="M0.500 3.500h4v5h-4zM10 12v4M6 17h8" /></svg>
        <Volume1 size={16} strokeWidth={1.2} className="ml-[3px]" />
        <span className="ml-[13px] text-[13px]">中</span>
        <span className="ml-[14px] w-[14px] h-[18px] bg-white text-black text-[13px] leading-[18px] text-center font-['Liberation_Sans',sans-serif]">M</span>
        <div className="ml-[16px] w-[66px] flex flex-col items-center gap-[5px] text-[12px] leading-[14px] font-['Open_Sans',sans-serif]">
          <span>11:47</span>
          <span>2017/6/1</span>
        </div>
        <div className="relative w-[48px] flex justify-center">
          <MessageSquare size={17} className="fill-white text-white" />
          <span className="absolute left-[22px] top-[8px] w-[16px] h-[16px] rounded-full bg-[#333] border border-[#888] text-[11px] leading-[14px] text-center font-bold">1</span>
        </div>
      </div>
    </div>
  )
}

export default function App() {
  return (
    <div className="w-[1920px] h-[1080px] overflow-hidden flex flex-col bg-white font-['Noto_Sans_CJK_SC',sans-serif]">
      <TitleBar />
      <TabBar />
      <Ribbon />
      <FormulaBar />
      <div className="flex h-[820px] shrink-0">
        <SheetGrid />
        <VScroll />
      </div>
      <SheetBar />
      <StatusBar />
      <Taskbar />
    </div>
  )
}
